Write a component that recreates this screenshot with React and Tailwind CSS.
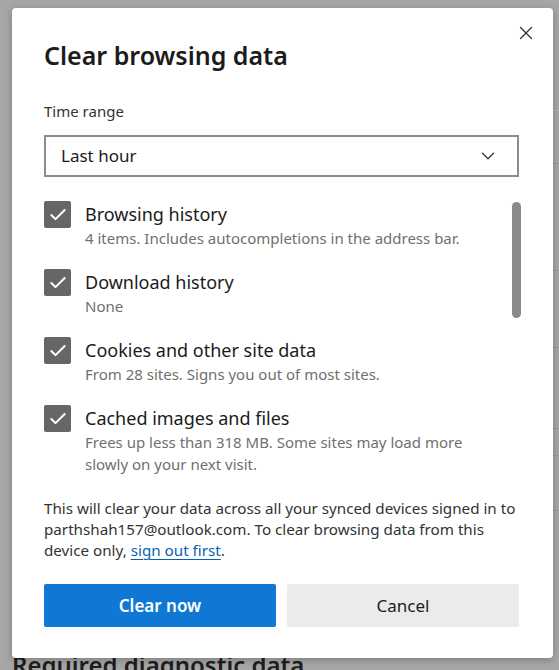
import { Check, ChevronDown, X } from "lucide-react"

const items = [
  { title: "Browsing history", desc: ["4 items. Includes autocompletions in the address bar."] },
  { title: "Download history", desc: ["None"] },
  { title: "Cookies and other site data", desc: ["From 28 sites. Signs you out of most sites."] },
  {
    title: "Cached images and files",
    desc: ["Frees up less than 318 MB. Some sites may load more", "slowly on your next visit."],
  },
]

export default function App() {
  return (
    <div
      className="relative h-[670px] w-[559px] overflow-hidden bg-[#a7a7a7]"
      style={{ fontFamily: '"Segoe UI", "Noto Sans", sans-serif' }}
    >
      {/* page behind the overlay */}
      <div className="absolute right-0 top-0 flex h-full w-[7px] flex-col">
        <div className="h-[110px]" />
        <div className="h-[53px] border-t border-[#b4b4b4]" />
        <div className="h-[107px] border-t border-[#9a9a9a]" />
        <div className="h-[77px] border-t border-[#9a9a9a]" />
        <div className="h-[81px] border-t border-[#9a9a9a]" />
        <div className="h-[27px] border-t border-[#9a9a9a]" />
        <div className="h-[55px] border-t border-[#9a9a9a]" />
        <div className="border-t border-[#9a9a9a]" />
      </div>

      <div className="relative z-10 ml-[12px] mt-[8px] flex h-[650px] w-[541px] flex-col rounded-[4px] bg-white shadow-[0_2px_8px_rgba(0,0,0,0.25)]">
        <button className="absolute right-[16px] top-[14px] text-[#333]">
          <X size={22} strokeWidth={1.3} />
        </button>

        <h1 className="ml-[32px] mt-[30px] text-[25px] font-semibold leading-[34px] text-[#1b1b1b]">
          Clear browsing data
        </h1>

        <p className="ml-[32px] mt-[29px] text-[15px] leading-[20px] text-[#333]">Time range</p>

        <div className="ml-[32px] mt-[14px] flex h-[42px] w-[475px] items-center justify-between border-2 border-[#8d8d8d] pl-[15px] pr-[18px]">
          <span className="text-[17px] text-[#1b1b1b]">Last hour</span>
          <ChevronDown size={22} strokeWidth={1.3} className="text-[#333]" />
        </div>

        <div className="relative mt-[24px] flex flex-col gap-[20px] pl-[32px]">
          <div className="absolute right-[32px] top-[1px] h-[116px] w-[9px] rounded-full bg-[#8a8a8a]" />
          {items.map((it) => (
            <div key={it.title} className="flex gap-[14px]">
              <div className="flex h-[27px] w-[27px] shrink-0 items-center justify-center rounded-[2px] bg-[#666]">
                <Check size={20} strokeWidth={2.4} className="text-white" />
              </div>
              <div className="w-[410px]">
                <div className="text-[18px] leading-[26px] text-[#1b1b1b]">{it.title}</div>
                {it.desc.map((line) => (
                  <div key={line} className="text-[15px] leading-[22px] text-[#707070]">
                    {line}
                  </div>
                ))}
              </div>
            </div>
          ))}
        </div>

        <div className="ml-[32px] mt-[23px] text-[15.2px] leading-[21px] text-[#333]">
          <div>This will clear your data across all your synced devices signed in to</div>
          <div>parthshah157@outlook.com. To clear browsing data from this</div>
          <div>
            device only, <a className="text-[#0b5fb3] underline underline-offset-[3px]">sign out first</a>.
          </div>
        </div>

        <div className="ml-[32px] mt-[23px] flex gap-[11px]">
          <button className="h-[43px] w-[232px] rounded-[2px] bg-[#0f78d4] text-[17px] font-semibold text-white">
            Clear now
          </button>
          <button className="h-[43px] w-[232px] rounded-[2px] bg-[#ebebeb] text-[17px] text-[#1b1b1b]">
            Cancel
          </button>
        </div>
      </div>

      <div className="ml-[12px] mt-[-8px] text-[24px] font-semibold leading-[30px] text-[#1e1e1e]">
        Required diagnostic data
      </div>
    </div>
  )
}
